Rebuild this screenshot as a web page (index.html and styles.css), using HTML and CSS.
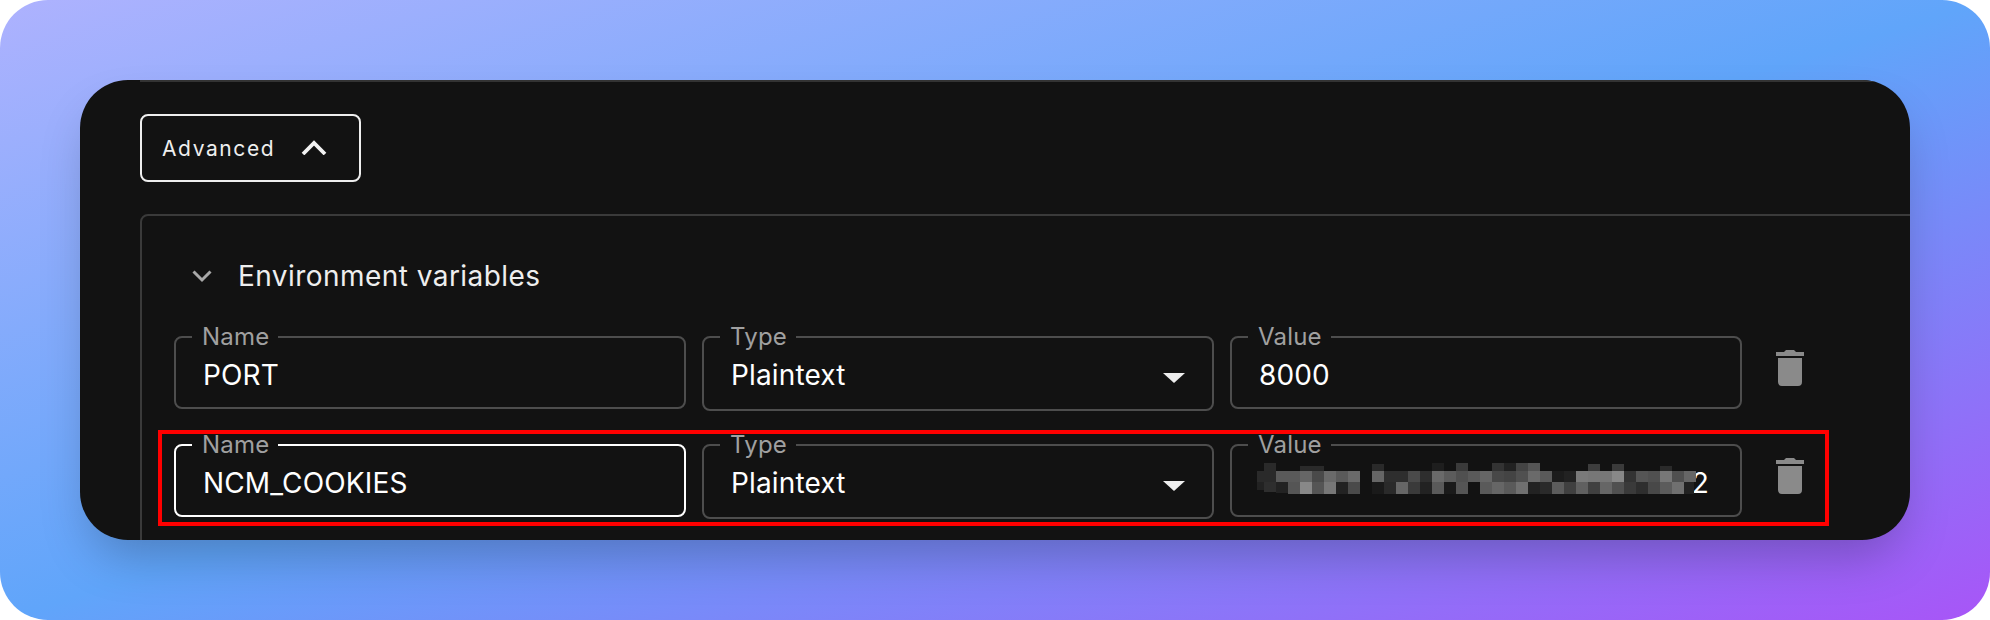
FILE: index.html
```html
<!DOCTYPE html>
<html lang="en">
<head>
<meta charset="utf-8">
<title>Environment variables</title>
<link rel="stylesheet" href="styles.css">
</head>
<body>
<main class="page">
  <section class="panel">
    <div class="content">
      <button class="advanced" type="button">
        <span>Advanced</span>
        <svg class="chev-up" width="26" height="16" viewBox="0 0 26 16"><path d="M2 15 L13 4 L24 15" fill="none" stroke="#f2f2f2" stroke-width="3.8"/></svg>
      </button>
      <div class="box">
        <div class="title">
          <svg class="chev-down" width="20" height="14" viewBox="0 0 20 14"><path d="M1.5 2.5 L10 11 L18.5 2.5" fill="none" stroke="#a8a8a8" stroke-width="3"/></svg>
          <h2>Environment variables</h2>
        </div>
        <div class="row">
          <fieldset class="field"><legend>Name</legend><div class="val">PORT</div></fieldset>
          <fieldset class="field field-select"><legend>Type</legend><div class="val">Plaintext</div><i class="caret"></i></fieldset>
          <fieldset class="field"><legend>Value</legend><div class="val">8000</div></fieldset>
          <svg class="trash" width="28" height="36" viewBox="0 0 28 36"><path fill="#8a8a8a" d="M0 2H8L10 0H18L20 2H28V6H0ZM2 8H26V32a4 4 0 0 1-4 4H6a4 4 0 0 1-4-4Z"/></svg>
        </div>
        <div class="row">
          <fieldset class="field field-focus"><legend>Name</legend><div class="val">NCM_COOKIES</div></fieldset>
          <fieldset class="field field-select"><legend>Type</legend><div class="val">Plaintext</div><i class="caret"></i></fieldset>
          <fieldset class="field"><legend>Value</legend><div class="val val-end">2</div>
            <svg class="mosaic" width="456" height="32" viewBox="0 0 456 32" shape-rendering="crispEdges">
              <g fill="#2a2a2a"><rect x="12" y="0" width="12" height="8"/><rect x="48" y="3" width="24" height="5"/><rect x="120" y="1" width="12" height="7"/><rect x="180" y="0" width="12" height="8" fill="#1e1e1e"/><rect x="204" y="0" width="12" height="8" fill="#3a3a3a"/><rect x="240" y="0" width="12" height="8" fill="#333"/><rect x="252" y="0" width="12" height="8" fill="#222"/><rect x="264" y="0" width="12" height="8" fill="#444"/><rect x="276" y="0" width="12" height="8" fill="#555"/><rect x="336" y="1" width="12" height="7" fill="#3d3d3d"/><rect x="360" y="1" width="12" height="7" fill="#3a3a3a"/><rect x="408" y="3" width="12" height="5"/></g>
              <g id="r2"><rect x="5" y="8" width="7" height="11" fill="#2a2a2a"/><rect x="12" y="8" width="12" height="11" fill="#2a2a2a"/><rect x="24" y="8" width="12" height="11" fill="#5a5a5a"/><rect x="36" y="8" width="12" height="11" fill="#5a5a5a"/><rect x="48" y="8" width="12" height="11" fill="#666"/><rect x="60" y="8" width="12" height="11" fill="#4a4a4a"/><rect x="72" y="8" width="12" height="11" fill="#6a6a6a"/><rect x="84" y="8" width="12" height="11" fill="#5a5a5a"/><rect x="96" y="8" width="12" height="11" fill="#6a6a6a"/><rect x="120" y="8" width="12" height="11" fill="#666"/><rect x="132" y="8" width="12" height="11" fill="#2e2e2e"/><rect x="144" y="8" width="12" height="11" fill="#2e2e2e"/><rect x="156" y="8" width="12" height="11" fill="#4a4a4a"/><rect x="168" y="8" width="12" height="11" fill="#2e2e2e"/><rect x="180" y="8" width="12" height="11" fill="#6a6a6a"/><rect x="192" y="8" width="12" height="11" fill="#5c5c5c"/><rect x="204" y="8" width="12" height="11" fill="#505050"/><rect x="216" y="8" width="12" height="11" fill="#5a5a5a"/><rect x="228" y="8" width="12" height="11" fill="#666"/><rect x="240" y="8" width="12" height="11" fill="#484848"/><rect x="252" y="8" width="12" height="11" fill="#444"/><rect x="264" y="8" width="12" height="11" fill="#505050"/><rect x="276" y="8" width="12" height="11" fill="#6a6a6a"/><rect x="288" y="8" width="12" height="11" fill="#5a5a5a"/><rect x="300" y="8" width="12" height="11" fill="#1c1c1c"/><rect x="312" y="8" width="12" height="11" fill="#222"/><rect x="324" y="8" width="12" height="11" fill="#7a7a7a"/><rect x="336" y="8" width="12" height="11" fill="#777"/><rect x="348" y="8" width="12" height="11" fill="#777"/><rect x="360" y="8" width="12" height="11" fill="#888"/><rect x="372" y="8" width="12" height="11" fill="#333"/><rect x="384" y="8" width="12" height="11" fill="#555"/><rect x="396" y="8" width="12" height="11" fill="#505050"/><rect x="408" y="8" width="12" height="11" fill="#777"/><rect x="420" y="8" width="12" height="11" fill="#505050"/><rect x="432" y="8" width="12" height="11" fill="#666"/></g>
              <g id="r3"><rect x="5" y="19" width="7" height="8" fill="#222"/><rect x="12" y="19" width="12" height="10" fill="#2e2e2e"/><rect x="24" y="19" width="12" height="11" fill="#222"/><rect x="36" y="19" width="12" height="12" fill="#555"/><rect x="48" y="19" width="12" height="12" fill="#888"/><rect x="60" y="19" width="12" height="12" fill="#555"/><rect x="72" y="19" width="12" height="12" fill="#777"/><rect x="84" y="19" width="12" height="12" fill="#222"/><rect x="96" y="19" width="12" height="12" fill="#4a4a4a"/><rect x="120" y="19" width="12" height="12" fill="#1a1a1a"/><rect x="132" y="19" width="12" height="12" fill="#2a2a2a"/><rect x="144" y="19" width="12" height="12" fill="#666"/><rect x="156" y="19" width="12" height="12" fill="#3a3a3a"/><rect x="168" y="19" width="12" height="12" fill="#222"/><rect x="180" y="19" width="12" height="12" fill="#5a5a5a"/><rect x="192" y="19" width="12" height="12" fill="#1a1a1a"/><rect x="204" y="19" width="12" height="12" fill="#555"/><rect x="228" y="19" width="12" height="12" fill="#5a5a5a"/><rect x="240" y="19" width="12" height="12" fill="#666"/><rect x="252" y="19" width="12" height="12" fill="#5a5a5a"/><rect x="264" y="19" width="12" height="12" fill="#707070"/><rect x="276" y="19" width="12" height="12" fill="#222"/><rect x="288" y="19" width="12" height="12" fill="#2a2a2a"/><rect x="300" y="19" width="12" height="12" fill="#5c5c5c"/><rect x="312" y="19" width="12" height="12" fill="#404040"/><rect x="324" y="19" width="12" height="12" fill="#606060"/><rect x="336" y="19" width="12" height="12" fill="#404040"/><rect x="348" y="19" width="12" height="12" fill="#666"/><rect x="360" y="19" width="12" height="12" fill="#505050"/><rect x="372" y="19" width="12" height="12" fill="#3a3a3a"/><rect x="384" y="19" width="12" height="12" fill="#2e2e2e"/><rect x="396" y="19" width="12" height="12" fill="#484848"/><rect x="408" y="19" width="12" height="12" fill="#5c5c5c"/><rect x="420" y="19" width="12" height="12" fill="#707070"/><rect x="432" y="19" width="10" height="12" fill="#222"/></g>
            </svg>
          </fieldset>
          <svg class="trash" width="28" height="36" viewBox="0 0 28 36"><path fill="#8a8a8a" d="M0 2H8L10 0H18L20 2H28V6H0ZM2 8H26V32a4 4 0 0 1-4 4H6a4 4 0 0 1-4-4Z"/></svg>
        </div>
      </div>
    </div>
    <div class="highlight"></div>
  </section>
</main>
</body>
</html>
```
FILE: styles.css
```css
* { box-sizing: border-box; }
html, body { margin: 0; background: #fff; }
body { font-family: Inter, "Liberation Sans", sans-serif; }

.page {
  width: 1990px;
  height: 620px;
  padding: 80px;
  overflow: hidden;
  border-radius: 48px;
  background: linear-gradient(to bottom right, #aeb2fe, #60a5fa, #a855f7);
}

.panel {
  position: relative;
  height: 460px;
  overflow: hidden;
  border-radius: 48px;
  background: #121212;
  box-shadow: 0 25px 50px -12px rgba(0, 0, 0, 0.25);
}

.content {
  margin-left: 60px;
  padding-top: 32px;
  border-top: 2px solid #333;
}

.advanced {
  display: flex;
  align-items: center;
  width: 221px;
  height: 68px;
  padding: 0 0 0 20px;
  gap: 26px;
  border: 2px solid #eee;
  border-radius: 8px;
  background: transparent;
  color: #eee;
  font: 400 21px Inter, sans-serif;
  letter-spacing: 1.6px;
}

.advanced span { margin-top: 1px; }

.chev-up { display: block; margin-top: -2px; }

.box {
  width: 1800px;
  height: 400px;
  margin-top: 32px;
  padding: 38px 0 0 32px;
  border: 2px solid #3a3a3a;
  border-radius: 8px;
}

.title {
  display: flex;
  align-items: center;
  height: 44px;
  margin-bottom: 25px;
  padding-left: 18px;
  gap: 26px;
}

.title h2 {
  margin: 0;
  color: #eee;
  font-size: 28px;
  font-weight: 400;
  letter-spacing: 0.45px;
}

.chev-down { display: block; }

.row {
  display: flex;
  align-items: flex-start;
  gap: 16px;
  height: 108px;
}

.field {
  position: relative;
  flex: none;
  width: 512px;
  height: 86px;
  margin: 0;
  padding: 0 0 0 27px;
  border: 2px solid #4d4d4d;
  border-radius: 8px;
}

.field legend {
  height: 28px;
  margin-left: -11px;
  padding: 0 9px 0 10px;
  color: #a0a0a0;
  font-size: 24px;
  line-height: 28px;
  letter-spacing: 0.2px;
}

.field-select { height: 88px; }
.field-focus { border-color: #fff; }

.val {
  color: #fff;
  font-size: 28px;
  line-height: 32px;
  margin-top: 8px;
  letter-spacing: 0.15px;
}

.val-end {
  text-align: right;
  padding-right: 31px;
}

.caret {
  position: absolute;
  top: 22px;
  right: 27px;
  border-style: solid;
  border-width: 10px 11px 0;
  border-color: #eee transparent transparent;
}

.mosaic {
  position: absolute;
  left: 20px;
  top: 4px;
}

.trash { flex: none; margin: 27px 0 0 18px; }

.highlight {
  position: absolute;
  left: 78px;
  top: 350px;
  width: 1671px;
  height: 96px;
  border: 4px solid #f00;
}
```
